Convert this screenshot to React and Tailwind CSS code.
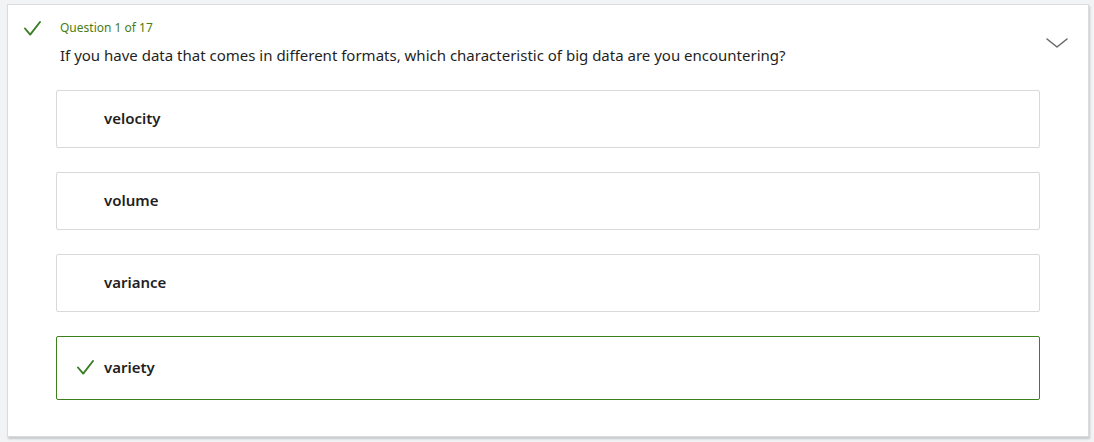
const options = [
  { label: 'velocity' },
  { label: 'volume' },
  { label: 'variance' },
  { label: 'variety', correct: true },
]

function CheckMark({ className }) {
  return (
    <svg viewBox="0 0 17 15" className={className} fill="none">
      <path d="M1 7.5 L6.2 13.6 L16 1" stroke="currentColor" strokeWidth="1.9" strokeLinecap="round" strokeLinejoin="round" />
    </svg>
  )
}

function Option({ label, correct }) {
  return (
    <div
      className={`flex items-center rounded-[2px] border bg-white pl-[20px] ${
        correct ? 'h-[64px] border-[#3f7f1b]' : 'h-[58px] border-[#d9d9d9]'
      }`}
    >
      <div className="flex w-[27px] items-center">
        {correct && <CheckMark className="h-[15px] w-[17px] text-[#3b7d23]" />}
      </div>
      <span className="text-[15px] font-semibold text-[#1f1f1f]">{label}</span>
    </div>
  )
}

export default function App() {
  return (
    <div className="min-h-[442px] bg-[#f2f3f5] pl-[7px] pt-[4px] font-['Noto_Sans',sans-serif]">
      <div className="flex h-[433px] w-[1082px] border border-[#dcdcdc] bg-white shadow-[1px_2px_2px_rgba(0,0,0,0.18)]">
        <div className="w-[48px] shrink-0 pl-[16px] pt-[16px]">
          <CheckMark className="h-[15px] w-[17px] text-[#3b7d23]" />
        </div>
        <div className="w-[984px] shrink-0 pt-[14px]">
          <p className="pl-[4px] text-[12px] text-[#4a7d12]">Question 1 of 17</p>
          <p className="mt-[7px] pl-[4px] text-[15px] text-[#1f1f1f]">
            If you have data that comes in different formats, which characteristic of big data are you encountering?
          </p>
          <div className="mt-[23px] flex flex-col gap-[24px]">
            {options.map((o) => (
              <Option key={o.label} {...o} />
            ))}
          </div>
        </div>
        <div className="flex flex-1 pl-[6px] pt-[33px]">
          <svg viewBox="0 0 22 10" className="h-[10px] w-[22px] text-[#666666]" fill="none">
            <path d="M1 1 L11 9 L21 1" stroke="currentColor" strokeWidth="1.5" strokeLinecap="round" strokeLinejoin="round" />
          </svg>
        </div>
      </div>
    </div>
  )
}
